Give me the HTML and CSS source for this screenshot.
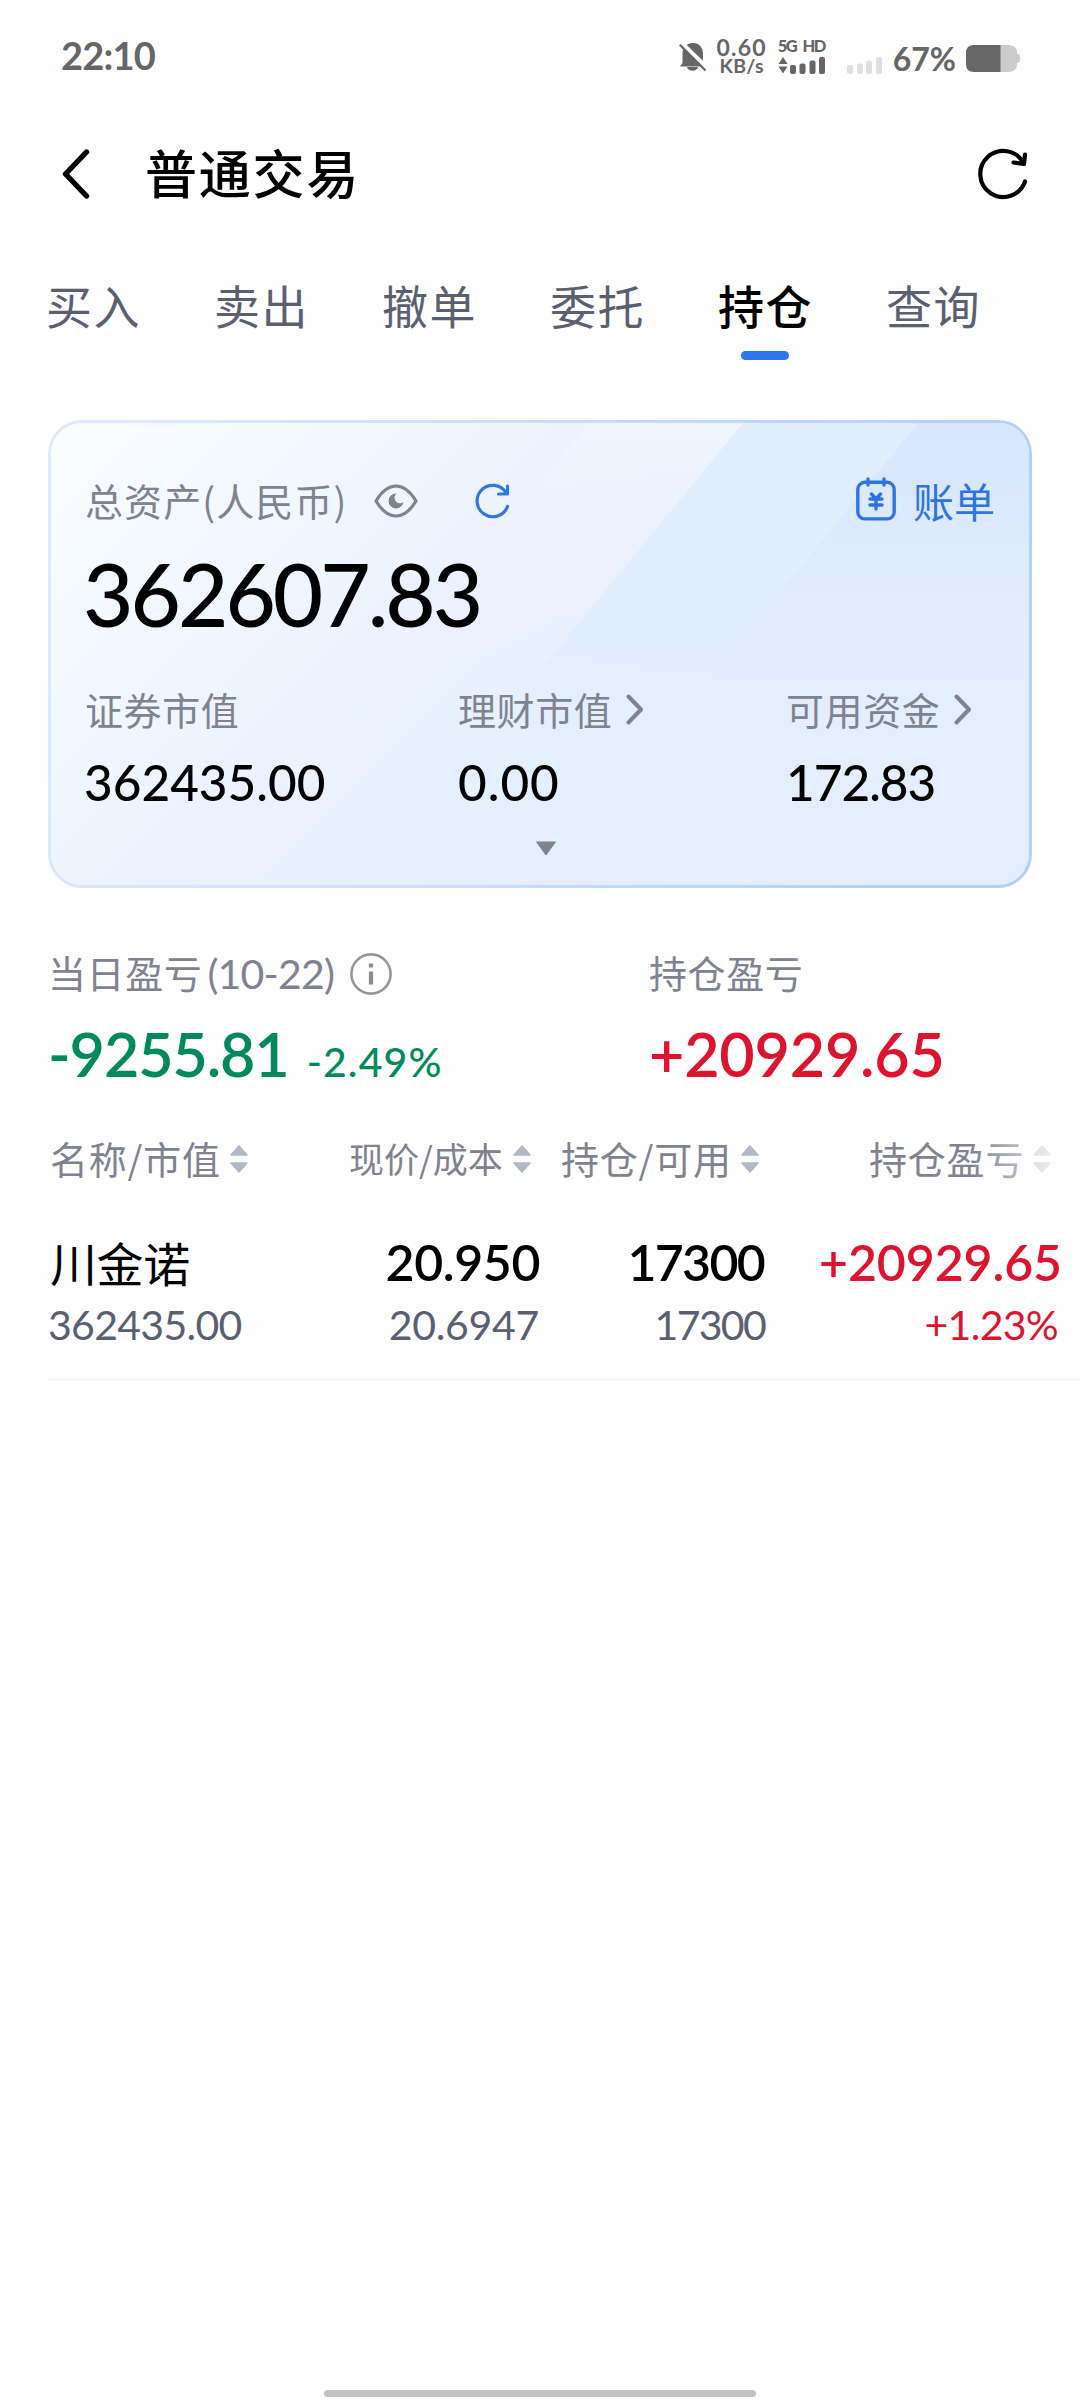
FILE: index.html
```html
<!DOCTYPE html>
<html lang="zh-CN">
<head>
<meta charset="utf-8">
<title>普通交易</title>
<link rel="stylesheet" href="styles.css">
</head>
<body>
<div class="screen">
  <div class="status">
    <span class="clock num">22:10</span>
    <div class="status-icons">
      <svg class="bell" width="28" height="32" viewBox="0 0 28 32"><path d="M3.5 25.5h21c1.400 0 1.400-1.500.5-2.300L24 21.500V13C24 6 20 2 14 2S3.500 6 3.500 13v9L1 25.500z" fill="#666"/><path d="M8 26h11c-1 5-10 5-11 0z" fill="#666"/><path d="M2 1.500 28 27" stroke="#fff" stroke-width="4.500"/><path d="M.8 3.800 26.500 29.500" stroke="#666" stroke-width="2.200"/></svg>
      <div class="speed"><span class="rate num">0.60</span><span class="unit num">KB/s</span></div>
      <div class="net"><span class="net-type num">5G HD</span>
        <svg width="48" height="17" viewBox="0 0 48 17" fill="#666"><path d="M5 0l4.500 7h-9zM5 16.500l4.500-7h-9z"/><rect x="12" y="8" width="6" height="9" rx="2"/><rect x="21.500" y="6.500" width="6" height="10.500" rx="2"/><rect x="31.500" y="3.500" width="6" height="13.500" rx="2"/><rect x="41" y="0" width="6" height="17" rx="2"/></svg>
      </div>
      <svg class="sim2" width="36" height="17" viewBox="0 0 36 17" fill="#e0e0e0"><rect x="0" y="8" width="6" height="9" rx="2"/><rect x="10" y="6.500" width="6" height="10.500" rx="2"/><rect x="19" y="3.500" width="6" height="13.500" rx="2"/><rect x="29" y="0" width="6" height="17" rx="2"/></svg>
      <span class="percent num">67%</span>
      <svg class="battery" width="54" height="27" viewBox="0 0 54 27"><path d="M34 0h8q9 0 9 8v1q3 0 3 3v3q0 3-3 3v1q0 8-9 8h-8z" fill="#ccc"/><path d="M34.500 0H8Q0 0 0 8v11q0 8 8 8h26.500z" fill="#666"/></svg>
    </div>
  </div>

  <header class="header">
    <svg class="back" width="28" height="50" viewBox="0 0 28 50"><path d="M24.500 3 3.500 25 24.500 47" fill="none" stroke="#000" stroke-width="5.400" stroke-linecap="round" stroke-linejoin="round"/></svg>
    <h1 class="title cjk">普通交易</h1>
    <svg class="reload" width="50" height="52" viewBox="0 0 50 52" fill="none" stroke="#000" stroke-width="4.200" stroke-linecap="round" stroke-linejoin="round"><path d="M47 33.500A23 23 0 1 1 45.500 15M47 6.500 46 16 35.500 14.500"/></svg>
  </header>

  <nav class="tabs cjk">
    <span class="tab">买入</span><span class="tab">卖出</span><span class="tab">撤单</span><span class="tab">委托</span><span class="tab active">持仓</span><span class="tab">查询</span>
  </nav>

  <section class="card">
    <svg class="bands" viewBox="0 0 978 462" preserveAspectRatio="none">
      <defs>
        <linearGradient id="g1" x1="0" y1="0" x2="0" y2="1"><stop offset="0" stop-color="#eff6ff"/><stop offset=".5" stop-color="#edf1fc" stop-opacity=".6"/><stop offset="1" stop-color="#e6f0fe" stop-opacity="0"/></linearGradient>
        <linearGradient id="g2" x1="0" y1="0" x2="0" y2="1"><stop offset="0" stop-color="#e1eefe"/><stop offset=".65" stop-color="#e1eefe"/><stop offset="1" stop-color="#e4eeff" stop-opacity="0"/></linearGradient>
        <linearGradient id="g3" x1="0" y1="0" x2="0" y2="1"><stop offset="0" stop-color="#d7e7ff"/><stop offset=".5" stop-color="#deeafd"/><stop offset="1" stop-color="#e4eeff"/></linearGradient>
      </defs>
      <path d="M537 0H692L430 320H275z" fill="url(#g1)"/>
      <path d="M692 0H978V320H430z" fill="url(#g2)"/>
      <path d="M867 0H978V260H654z" fill="url(#g3)"/>
    </svg>
    <div class="card-top">
      <span class="label asset cjk">总资产(人民币)</span>
      <svg class="eye" width="44" height="34" viewBox="0 0 44 34"><path d="M2 17C8 7 14 2 22 2s14 5 20 15C36 27 30 32 22 32S8 27 2 17z" fill="none" stroke="#80838f" stroke-width="3.200" stroke-linejoin="round"/><path d="M22 9.500a7.500 7.500 0 1 0 7.500 8.500a5.500 5.500 0 0 1-7-8.500z" fill="#80838f"/></svg>
      <svg class="mini-reload" width="35" height="36" viewBox="0 0 35 36" fill="none" stroke="#2f78e4" stroke-width="3.200" stroke-linecap="round" stroke-linejoin="round"><path d="M32.500 23.500A15.700 15.700 0 1 1 31 9.500M32.500 3v8H23.500"/></svg>
      <a class="bill">
        <svg width="40" height="44" viewBox="0 0 40 44" fill="none" stroke="#2f74e6" stroke-width="3.400" stroke-linecap="round"><rect x="1.800" y="5.300" width="36.400" height="36.600" rx="7"/><path d="M12 2v6M28 2v6"/><path d="M15.500 17l4.500 5 4.500-5M14 22h12M14 28h12M20 22v10"/></svg>
        <span class="bill-text cjk">账单</span>
      </a>
    </div>
    <div class="total num">362607.83</div>
    <div class="figures">
      <div class="figure"><span class="label cjk">证券市值</span><span class="value v1 num">362435.00</span></div>
      <div class="figure"><span class="label-row"><span class="label cjk">理财市值</span><svg width="18" height="31" viewBox="0 0 18 31"><path d="M2.500 2.500 15 15.500 2.500 28.500" fill="none" stroke="#80838f" stroke-width="4" stroke-linecap="round" stroke-linejoin="round"/></svg></span><span class="value v2 num">0.00</span></div>
      <div class="figure"><span class="label-row"><span class="label cjk">可用资金</span><svg width="18" height="31" viewBox="0 0 18 31"><path d="M2.500 2.500 15 15.500 2.500 28.500" fill="none" stroke="#80838f" stroke-width="4" stroke-linecap="round" stroke-linejoin="round"/></svg></span><span class="value v3 num">172.83</span></div>
    </div>
    <svg class="expand" width="22" height="15" viewBox="0 0 22 15"><path d="M1.500 1h19L11 14z" fill="#7f828f" stroke="#7f828f" stroke-linejoin="round"/></svg>
  </section>

  <section class="profit">
    <div class="profit-item">
      <div class="profit-head"><span class="label cjk">当日盈亏</span><span class="date num">(10-22)</span>
        <svg class="info" width="42" height="42" viewBox="0 0 42 42"><circle cx="21" cy="21" r="19.600" fill="none" stroke="#93979a" stroke-width="2.600"/><path d="M21 10.500v4M21 18.500v13" stroke="#8a8d92" stroke-width="4.200"/></svg></div>
      <div class="profit-value down"><span class="amount a1 num">-9255.81</span><span class="rate-pct num">-2.49%</span></div>
    </div>
    <div class="profit-item">
      <div class="profit-head"><span class="label cjk">持仓盈亏</span></div>
      <div class="profit-value up"><span class="amount a2 num">+20929.65</span></div>
    </div>
  </section>

  <section class="table">
    <div class="thead cjk">
      <span class="th c1"><span class="label">名称/市值</span><svg class="sort" width="18" height="28" viewBox="0 0 18 28"><path d="M9 1l8 9H1zM9 27l8-9H1z"/></svg></span>
      <span class="th c2"><span class="label small">现价/成本</span><svg class="sort" width="18" height="28" viewBox="0 0 18 28"><path d="M9 1l8 9H1zM9 27l8-9H1z"/></svg></span>
      <span class="th c3"><span class="label">持仓/可用</span><svg class="sort" width="18" height="28" viewBox="0 0 18 28"><path d="M9 1l8 9H1zM9 27l8-9H1z"/></svg></span>
      <span class="th c4"><span class="label">持仓盈亏</span><svg class="sort" width="18" height="28" viewBox="0 0 18 28"><path d="M9 1l8 9H1zM9 27l8-9H1z"/></svg></span>
    </div>
    <div class="row">
      <div class="cell d1"><span class="name cjk">川金诺</span><span class="sub num">362435.00</span></div>
      <div class="cell d2"><span class="main num">20.950</span><span class="sub num">20.6947</span></div>
      <div class="cell d3"><span class="main num">17300</span><span class="sub num">17300</span></div>
      <div class="cell d4 up"><span class="main num">+20929.65</span><span class="sub num">+1.23%</span></div>
    </div>
  </section>
  <div class="home-bar"></div>
</div>
</body>
</html>
```
FILE: styles.css
```css
* { box-sizing: border-box; }
body { margin: 0; background: #fff; }
h1 { margin: 0; }
svg { display: block; flex: none; }
.num { font-family: Lato, "Noto Sans", sans-serif; font-weight: 500; white-space: nowrap; }
.cjk { font-family: "Noto Sans CJK SC", sans-serif; white-space: nowrap; }
.screen { width: 1080px; height: 2400px; background: #fefefe; display: flex; flex-direction: column; overflow: hidden; }

.status { height: 110px; display: flex; justify-content: space-between; padding: 0 60px 0 61px; color: #666; }
.clock { font-size: 38px; font-weight: 700; line-height: 60px; padding-top: 25px; letter-spacing: -.8px; }
.status-icons { display: flex; }
.bell { margin-top: 41px; }
.speed { display: flex; flex-direction: column; align-items: center; margin: 35px 0 0 10px; width: 50px; }
.rate { font-size: 23px; font-weight: 700; line-height: 24px; letter-spacing: 1.2px; }
.unit { font-size: 19.5px; font-weight: 700; line-height: 14px; letter-spacing: .3px; }
.net { display: flex; flex-direction: column; margin: 37px 0 0 11px; width: 49px; }
.net-type { font-size: 16.5px; font-weight: 900; line-height: 18px; height: 20px; letter-spacing: -1.4px; word-spacing: 3.5px; }
.sim2 { margin: 57px 0 0 20px; }
.percent { font-size: 32px; font-weight: 700; line-height: 60px; padding-top: 29px; margin-left: 10px; }
.battery { margin: 45px 0 0 10px; }

.header { height: 126px; display: flex; align-items: center; padding: 2px 52px 0 62px; }
.title { font-size: 52px; font-weight: 500; line-height: 70px; margin: -4px 0 0 55px; letter-spacing: 1.8px; }
.reload { margin-left: auto; }

.tabs { display: flex; padding: 36px 0 0 46px; height: 184px; font-size: 46px; line-height: 64px; letter-spacing: 1.5px; color: #5b6070; }
.tab { width: 168px; }
.active { color: #000; font-weight: 500; }
.active::after { content: ""; display: block; width: 48px; height: 9px; border-radius: 5px; background: #2c76f0; margin: 15px 0 0 23px; }

.card { position: relative; height: 468px; margin: 0 48px; padding: 52px 34px 0; border: 3px solid transparent; border-radius: 34px; display: flex; flex-direction: column;
  background: linear-gradient(135deg, #fafdff 0%, #eff6ff 28%, #ebf1fd 44%, #e5f0fe 56%, #e4eeff 66%) padding-box, linear-gradient(100deg, #dfebfb, #c8dcf8 50%, #b3d1f8 85%) border-box; }
.card > * { position: relative; }
.card > .bands { position: absolute; inset: 0; width: 100%; height: 100%; border-radius: 31px; }
.label { font-size: 38px; line-height: 50px; letter-spacing: .6px; color: #80838f; }
.asset { letter-spacing: 1.1px; }
.card-top { display: flex; height: 50px; }
.eye { margin: 9px 0 0 26px; }
.mini-reload { margin: 8px 0 0 57px; }
.bill { display: flex; margin: 2px 0 0 auto; }
.bill-text { font-size: 41px; line-height: 50px; margin: -2px 0 0 17px; color: #2f74e6; }
.total { font-size: 87px; line-height: 90px; margin: 24px 0 0 -2px; letter-spacing: -3px; color: #000; }
.figures { display: grid; grid-template-columns: 373px 328px 1fr; margin-top: 45px; }
.figure { display: flex; flex-direction: column; }
.label-row { display: flex; align-items: center; gap: 14px; }
.value { font-size: 49.5px; line-height: 60px; margin-top: 18px; color: #000; }
.v1 { margin-left: -1px; }
.v2 { letter-spacing: 1px; }
.v3 { letter-spacing: -1px; }
.expand { margin: 29px 0 0 450px; }

.profit { display: grid; grid-template-columns: 601px 1fr; padding: 59px 0 0 48px; }
.profit-head { display: flex; height: 50px; }
.date { font-size: 41px; line-height: 53px; font-weight: 400; letter-spacing: -.8px; margin-left: 5px; color: #80838f; }
.info { margin: 6px 0 0 16px; }
.profit-value { display: flex; align-items: baseline; height: 70px; margin-top: 22px; }
.amount { font-size: 61px; line-height: 70px; font-weight: 600; }
.a1 { letter-spacing: -1.1px; }
.a2 { letter-spacing: -.2px; }
.rate-pct { font-size: 41px; margin-left: 18px; letter-spacing: 1.1px; }
.down { color: #008a5a; }
.up { color: #dc1430; }

.thead { position: relative; display: flex; margin-top: 44px; height: 50px; }
.thead::after { content: ""; position: absolute; top: 0; right: 0; width: 110px; height: 50px; background: linear-gradient(90deg, #fefefe00, #fefefe); }
.th { display: flex; flex: none; align-items: flex-start; gap: 9px; }
.th .label { letter-spacing: .8px; }
.th .small { font-size: 35px; letter-spacing: 0; }
.sort { margin-top: 12px; fill: #b1b8c6; stroke: #b1b8c6; stroke-width: 1.5px; stroke-linejoin: round; }
.c1 { width: 301px; padding-left: 50px; }
.c2 { width: 260px; padding-left: 48px; gap: 10px; }
.c3 { width: 308px; }
.row { display: grid; grid-template-columns: 340px 152px 226px 293px; margin: 49px 0 0 48px; height: 149px; border-bottom: 3px solid #f4f5f8; }
.cell { display: flex; flex-direction: column; align-items: flex-end; }
.d1 { align-items: flex-start; }
.name { font-size: 47px; line-height: 60px; margin-left: 2px; letter-spacing: -.4px; color: #000; }
.main { font-size: 50px; line-height: 60px; font-weight: 600; color: #000; }
.sub { font-size: 41px; line-height: 50px; margin-top: 8px; font-weight: 400; color: #5b6070; }
.d1 .sub { letter-spacing: -.7px; }
.d2 .main { letter-spacing: -.4px; }
.d2 .sub { letter-spacing: -.3px; margin-right: 1px; }
.d3 .main { letter-spacing: -1.7px; margin-right: 2px; }
.d3 .sub { letter-spacing: -1.7px; margin-right: 1px; }
.d4 .main { letter-spacing: -.1px; margin-right: -3px; }
.d4 .sub { letter-spacing: -.7px; margin-right: 1px; }
.up .main, .up .sub { color: #dc1430; }
.home-bar { width: 432px; height: 7px; border-radius: 4px; background: #c2c2c2; margin: auto auto 3px; }
```
